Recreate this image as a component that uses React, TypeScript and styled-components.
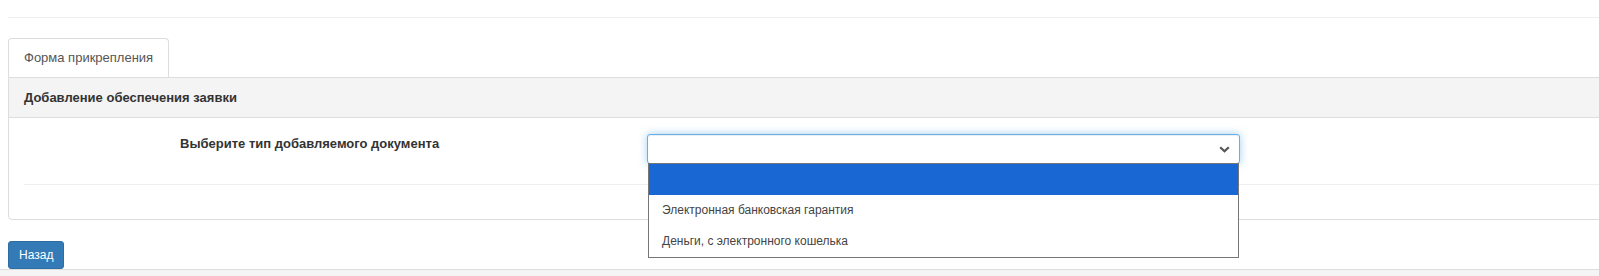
import React from 'react';
import styled, { createGlobalStyle } from 'styled-components';

const GlobalStyle = createGlobalStyle`
  html, body {
    margin: 0;
    padding: 0;
    overflow: hidden;
    background: #fff;
  }
  body {
    font-family: "Liberation Sans", Arial, Helvetica, sans-serif;
    font-size: 13px;
    color: #333;
  }
`;

const Page = styled.div`
  width: 1800px;
  padding: 17px 0 0 8px;
`;

const TopRule = styled.div`
  border-top: 1px solid #eee;
  margin-bottom: 20px;
`;

const Tabs = styled.ul`
  display: flex;
  list-style: none;
  margin: 0;
  padding: 0;
`;

const Tab = styled.li`
  padding: 10px 15px;
  line-height: 18px;
  color: #555;
  border: 1px solid #ddd;
  border-bottom: none;
  border-radius: 4px 4px 0 0;
  background: #fff;
`;

const Panel = styled.div`
  border: 1px solid #ddd;
  border-radius: 0 4px 4px 4px;
  background: #fff;
`;

const PanelHeading = styled.div`
  background: #f4f4f4;
  border-bottom: 1px solid #ddd;
  padding: 10px 15px;
  line-height: 19px;
  font-weight: bold;
  color: #333;
`;

const PanelBody = styled.div`
  padding: 16px 15px 34px;
`;

const FormRow = styled.div`
  display: grid;
  grid-template-columns: 623px 593px;
  align-items: start;
`;

const Label = styled.label`
  padding: 1px 0 0 156px;
  line-height: 18px;
  font-weight: bold;
  color: #333;
`;

const SelectWrap = styled.div`
  position: relative;
`;

const SelectBox = styled.div`
  box-sizing: border-box;
  height: 30px;
  border: 1px solid #66afe9;
  border-radius: 3px;
  background: #fff;
  box-shadow: inset 0 1px 1px rgba(0, 0, 0, 0.075), 0 0 8px rgba(102, 175, 233, 0.6);
  display: flex;
  align-items: center;
  justify-content: flex-end;
  padding-right: 9px;
`;

const Dropdown = styled.ul`
  position: absolute;
  top: calc(100% - 1px);
  left: 1px;
  right: 1px;
  margin: 0;
  padding: 0;
  list-style: none;
  border: 1px solid #767676;
  background: #fff;
  z-index: 5;
`;

const Option = styled.li<{ $active?: boolean }>`
  height: 31px;
  line-height: 31px;
  padding-left: 13px;
  font-size: 12px;
  color: #444;
  background: ${p => (p.$active ? '#1967d2' : '#fff')};
`;

const Divider = styled.div`
  border-top: 1px solid #eee;
  margin-top: 20px;
`;

const BackButton = styled.button`
  margin-top: 21px;
  height: 28px;
  padding: 0 10px;
  border: 1px solid #2e6da4;
  border-radius: 3px;
  background: #337ab7;
  color: #fff;
  font-family: inherit;
  font-size: 12px;
  line-height: 26px;
  display: block;
`;

const Footer = styled.div`
  border-top: 1px solid #ddd;
  background: #f4f4f4;
  height: 40px;
`;

const Chevron = () => (
  <svg width="11" height="7" viewBox="0 0 11 7">
    <path d="M1.2 1.2 L5.5 5.3 L9.8 1.2" fill="none" stroke="#555" strokeWidth="2.2" />
  </svg>
);

const options = ['', 'Электронная банковская гарантия', 'Деньги, с электронного кошелька'];

export default function App() {
  return (
    <>
      <GlobalStyle />
      <Page>
        <TopRule />
        <Tabs>
          <Tab>Форма прикрепления</Tab>
        </Tabs>
        <Panel>
          <PanelHeading>Добавление обеспечения заявки</PanelHeading>
          <PanelBody>
            <FormRow>
              <Label>Выберите тип добавляемого документа</Label>
              <SelectWrap>
                <SelectBox>
                  <Chevron />
                </SelectBox>
                <Dropdown>
                  {options.map((o, i) => (
                    <Option key={i} $active={i === 0}>{o}</Option>
                  ))}
                </Dropdown>
              </SelectWrap>
            </FormRow>
            <Divider />
          </PanelBody>
        </Panel>
        <BackButton>Назад</BackButton>
      </Page>
      <Footer />
    </>
  );
}
